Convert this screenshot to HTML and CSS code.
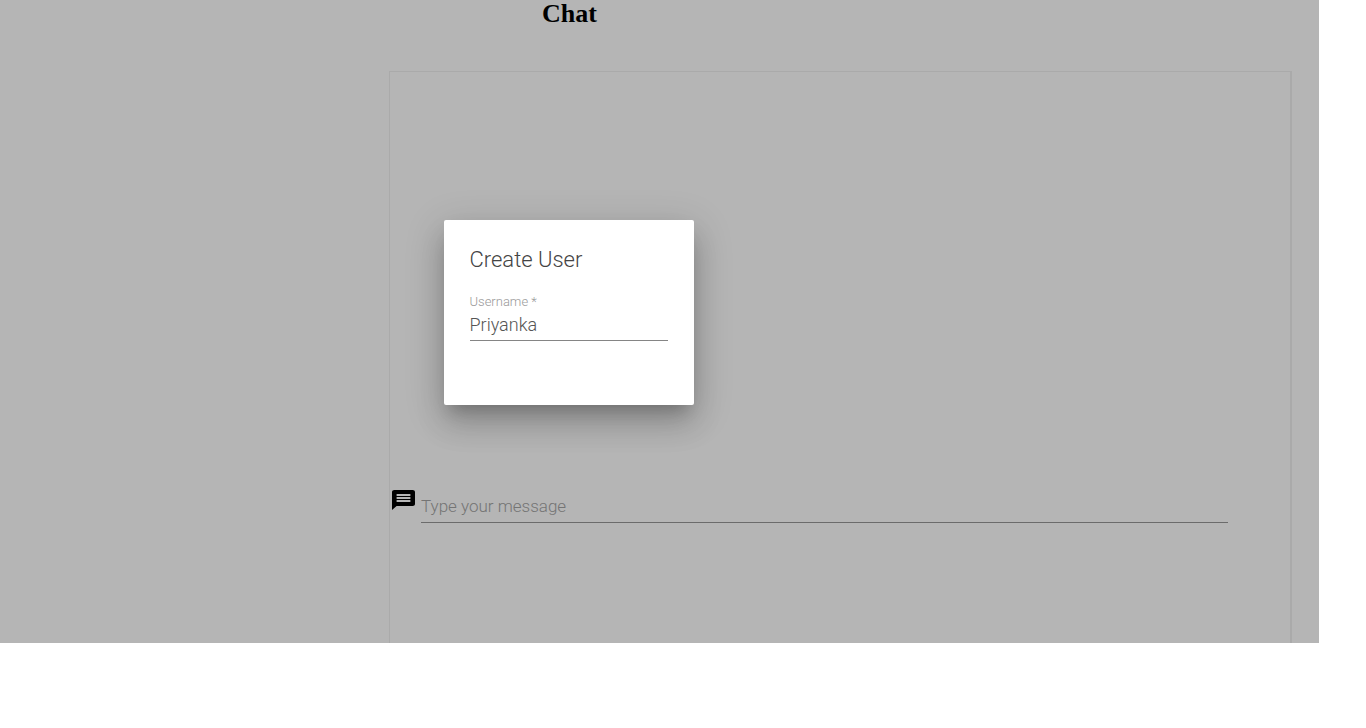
FILE: index.html
```html
<!DOCTYPE html>
<html lang="en">
<head>
<meta charset="utf-8">
<title>Chat</title>
<link rel="stylesheet" href="styles.css">
</head>
<body>
<div class="app">
  <h1 class="title">Chat</h1>
  <main class="panel">
    <form class="composer">
      <svg class="icon" viewBox="2 2 20 20" preserveAspectRatio="none" aria-hidden="true"><path d="M20 2H4c-1.1 0-2 .9-2 2v18l4-4h14c1.1 0 2-.9 2-2V4c0-1.1-.9-2-2-2zm-2 12H6v-2h12v2zm0-3H6V9h12v2zm0-3H6V6h12v2z"/></svg>
      <input class="field message" type="text" placeholder="Type your message" aria-label="Type your message">
    </form>
  </main>
  <div class="overlay">
    <form class="dialog" role="dialog" aria-labelledby="dialog-title">
      <h2 class="dialog-title" id="dialog-title">Create User</h2>
      <label class="label" for="username">Username *</label>
      <input class="field username" id="username" type="text" value="Priyanka" required>
    </form>
  </div>
</div>
</body>
</html>
```
FILE: styles.css
```css
* {
  box-sizing: border-box;
}

body {
  margin: 0;
  background: #fff;
  font-family: Roboto, "Liberation Sans", sans-serif;
  font-weight: 300;
}

.app {
  position: relative;
  display: flex;
  flex-direction: column;
  min-height: calc(100vh - 85px);
  margin: 0 47px 85px 0;
  background: #b5b5b5;
}

.title {
  margin: 0 180px 43px 0;
  font: bold 26px/28px "Liberation Serif", serif;
  text-align: center;
}

.panel {
  flex: 1;
  margin: 0 27px 0 389px;
  padding: 418px 62px 0 2px;
  border: solid #aaa;
  border-width: 1px 2px 0 1px;
}

.composer {
  display: flex;
  align-items: flex-start;
  gap: 6px;
}

.icon {
  flex: none;
  width: 23px;
  height: 20px;
}

.field {
  display: block;
  min-width: 0;
  padding: 0;
  border: 0;
  border-bottom: 1px solid #6b6b6b;
  border-radius: 0;
  outline: 0;
  background: transparent;
  font: inherit;
  font-size: 17px;
}

.message {
  flex: 1;
  height: 33px;
}

.message::placeholder {
  color: #747474;
}

.overlay {
  position: absolute;
  inset: 0 182px 18px 0;
  display: flex;
  align-items: center;
  justify-content: center;
}

.dialog {
  width: 250px;
  padding: 26px 26px 64px;
  border-radius: 2px;
  background: #fff;
  box-shadow: 0 11px 15px -7px rgba(0, 0, 0, .2), 0 20px 30px 0 rgba(0, 0, 0, .14), 0 9px 38px 4px rgba(0, 0, 0, .14);
}

.dialog-title {
  margin: 0 0 20px;
  color: #444;
  font-size: 22px;
  font-weight: 300;
  line-height: 28px;
}

.label {
  display: block;
  color: #999;
  font-size: 13px;
  line-height: 16px;
}

.username {
  width: 100%;
  height: 31px;
  padding-bottom: 2px;
  border-color: #858585;
  color: #555;
  font-size: 18px;
}
```
